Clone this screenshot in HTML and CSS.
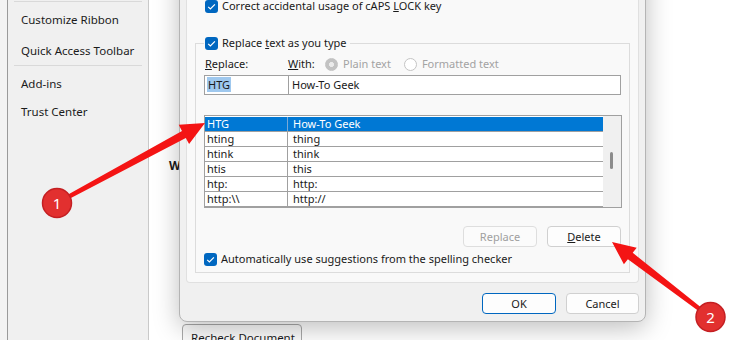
FILE: index.html
```html
<!DOCTYPE html>
<html>
<head>
<meta charset="utf-8">
<link rel="stylesheet" href="styles.css">
</head>
<body>
<div class="app">
  <nav class="nav">
    <div class="sep"></div>
    <div class="item i1">Customize Ribbon</div>
    <div class="item i2">Quick Access Toolbar</div>
    <div class="sep"></div>
    <div class="item i3">Add-ins</div>
    <div class="item">Trust Center</div>
  </nav>
  <main class="content">
    <h3 class="sect">When correcting spelling and grammar in Word</h3>
    <div class="rule"></div>
    <button class="recheck">Recheck Document</button>
  </main>
</div>

<div class="dialog">
  <div class="panel">
    <div class="check-row top-check">
      <span class="cb"><svg viewBox="0 0 13 13" width="13" height="13"><path d="M3.2 6.8 L5.4 9 L9.9 4.3" fill="none" stroke="#fff" stroke-width="1.2"/></svg></span>
      <span>Correct accidental usage of cAPS <u>L</u>OCK key</span>
    </div>
    <fieldset class="group">
      <legend class="check-row legend">
        <span class="cb"><svg viewBox="0 0 13 13" width="13" height="13"><path d="M3.2 6.8 L5.4 9 L9.9 4.3" fill="none" stroke="#fff" stroke-width="1.2"/></svg></span>
        <span>Replace <u>t</u>ext as you type</span>
      </legend>
      <div class="labels">
        <span class="lab-replace"><u>R</u>eplace:</span>
        <span class="lab-with"><u>W</u>ith:</span>
        <span class="radio on"></span>
        <span class="dis plain">Plain text</span>
        <span class="radio"></span>
        <span class="dis">Formatted text</span>
      </div>
      <div class="inputs">
        <div class="field f1"><span class="sel">HTG</span></div>
        <div class="field f2">How-To Geek</div>
      </div>
      <div class="list">
        <div class="rows">
          <div class="row selected"><span class="c1">HTG</span><span class="c2">How-To Geek</span></div>
          <div class="row"><span class="c1">hting</span><span class="c2">thing</span></div>
          <div class="row"><span class="c1">htink</span><span class="c2">think</span></div>
          <div class="row"><span class="c1">htis</span><span class="c2">this</span></div>
          <div class="row"><span class="c1">htp:</span><span class="c2">http:</span></div>
          <div class="row"><span class="c1">http:\\</span><span class="c2">http://</span></div>
        </div>
        <div class="scroll"><span class="thumb"></span></div>
      </div>
      <div class="actions">
        <button class="btn" disabled>Replace</button>
        <button class="btn"><u>D</u>elete</button>
      </div>
      <div class="check-row auto-check">
        <span class="cb"><svg viewBox="0 0 13 13" width="13" height="13"><path d="M3.2 6.8 L5.4 9 L9.9 4.3" fill="none" stroke="#fff" stroke-width="1.2"/></svg></span>
        <span>Automatically use sug<u>g</u>estions from the spelling checker</span>
      </div>
    </fieldset>
  </div>
  <div class="footer">
    <button class="btn ok">OK</button>
    <button class="btn cancel">Cancel</button>
  </div>
</div>

<svg class="annot" width="750" height="340" viewBox="0 0 750 340">
  <polygon class="arrow" points="205,123 189.1,144.1 185.8,137.9 58,204.8 56,201.2 182,130.9 178.7,124.7"/>
  <polygon class="arrow" points="612,242 636.7,247.7 632.7,252.8 711.2,315.4 708.8,318.6 627.9,259.2 623.9,264.3"/>
  <circle class="badge" cx="57" cy="203" r="14.5"/>
  <text class="badge-num" x="57" y="208.5">1</text>
  <circle class="badge" cx="710.5" cy="317" r="14.5"/>
  <text class="badge-num" x="710.5" y="322.5">2</text>
</svg>
</body>
</html>
```
FILE: styles.css
```css
* { box-sizing: border-box; }
html, body { margin: 0; padding: 0; }
body {
  width: 750px;
  height: 340px;
  overflow: hidden;
  position: relative;
  font-family: "Noto Sans", "Open Sans", sans-serif;
  font-size: 11px;
  line-height: 16px;
  color: #1a1a1a;
  background: #f3f3f3;
}

/* background window */
.app { display: flex; height: 340px; padding-left: 7px; }
.nav {
  width: 142px;
  background: #f0f0f0;
  border-left: 1px solid #9a9a9a;
  border-right: 1px solid #c9c9c9;
  padding-top: 1px;
  display: flex;
  flex-direction: column;
}
.sep { height: 1px; background: #d9d9d9; margin: 0 6px; flex: none; }
.item { height: 28px; line-height: 28px; padding-left: 13px; white-space: nowrap; color: #1b1b1b; font-size: 11.5px; }
.i1 { margin-top: 4px; }
.i2 { margin-top: 3px; }
.i3 { margin-top: 4px; }

.content {
  flex: 1;
  background: #fff;
  padding-left: 20px;
  display: flex;
  flex-direction: column;
  min-width: 0;
}
.sect { margin: 158px 0 0; font-size: 12px; font-weight: 700; line-height: 16px; white-space: nowrap; }
.rule { height: 1px; background: #d4d4d4; margin-top: 7px; }
.recheck {
  align-self: flex-start;
  margin: 143px 0 0 13px;
  width: 120px;
  height: 28px;
  flex: none;
  background: #fbfbfb;
  border: 1px solid #a9a9a9;
  border-radius: 4px;
  font: inherit;
  font-size: 11.5px;
  color: #1a1a1a;
  text-align: left;
  white-space: nowrap;
  padding: 0 8px;
}

/* dialog */
.dialog {
  position: absolute;
  left: 179px;
  top: -40px;
  width: 467px;
  height: 362px;
  background: #f0f0f0;
  border: 1px solid #b4b4b4;
  border-radius: 0 0 8px 8px;
  box-shadow: 0 6px 26px rgba(0, 0, 0, 0.26);
  padding: 0 6px;
  display: flex;
  flex-direction: column;
}
.panel {
  background: #f9f9f9;
  border: 1px solid #e0e0e0;
  border-top: 0;
  border-radius: 0 0 4px 4px;
  padding: 37px 8px 0;
}
.check-row { display: flex; align-items: center; height: 16px; gap: 4px; white-space: nowrap; }
.top-check { margin-left: 10px; }
.cb {
  width: 13px;
  height: 13px;
  border-radius: 3px;
  background: #0067c0;
  display: block;
  flex: none;
}
.cb svg { display: block; }

.group {
  margin: 21px 0 9px;
  padding: 0 8px 5px;
  border: 1px solid #dcdcdc;
  min-width: 0;
}
.legend { padding: 0 3px 0 1px; }

.labels { display: flex; align-items: center; height: 16px; margin-top: 5px; white-space: nowrap; }
.lab-replace { width: 84px; padding-left: 1px; }
.lab-with { width: 37px; }
.radio {
  width: 13px;
  height: 13px;
  border-radius: 50%;
  border: 1px solid #c4c4c4;
  background: #fff;
  flex: none;
  margin-right: 5px;
}
.radio.on { border-color: #c2c2c2; background: radial-gradient(circle, #eaeaea 0 2.2px, #c2c2c2 2.8px); }
.dis { color: #a3a3a3; }
.plain { margin-right: 13px; }

.inputs { display: flex; margin-top: 3px; height: 20px; }
.field {
  height: 20px;
  border: 1px solid #a0a0a0;
  background: #fff;
  line-height: 18px;
  white-space: nowrap;
}
.f1 { width: 85px; padding-left: 2px; }
.f2 { flex: 1; margin-left: -1px; padding-left: 3px; }
.sel { background: #9fc8ee; padding: 0 1px; display: inline-block; line-height: 15px; }

.list {
  display: flex;
  margin-top: 20px;
  height: 93px;
  border: 1px solid #a0a0a0;
  background: #fff;
  margin-right: -1px;
}
.rows { flex: 1; padding-top: 1px; }
.row { display: flex; height: 15px; border-bottom: 1px solid #a0a0a0; line-height: 14px; white-space: nowrap; }
.c1 { width: 83px; border-right: 1px solid #a0a0a0; padding-left: 2px; flex: none; }
.c2 { padding-left: 5px; }
.row.selected { background: #0078d4; color: #fff; }
.row.selected .c1 { border-right-color: #7aa9d6; }
.scroll { width: 18px; background: #f0f0f0; flex: none; }
.thumb { display: block; width: 3px; height: 17px; background: #8b8b8b; border-radius: 2px; margin: 36px 0 0 7px; }

.actions { display: flex; justify-content: flex-end; gap: 10px; margin-top: 18px; }
.btn {
  width: 74px;
  height: 21px;
  border: 1px solid #d0d0d0;
  border-radius: 4px;
  background: #fdfdfd;
  font: inherit;
  line-height: 18px;
  color: #1a1a1a;
  padding: 0;
}
.btn:disabled { color: #9f9f9f; border-color: #dedede; background: #fbfbfb; }
.auto-check { margin-top: 4px; }

.footer { display: flex; justify-content: flex-end; gap: 10px; margin-top: 10px; }
.ok { border-color: #0067c0; }
.cancel { width: 73px; }

/* annotations */
.annot { position: absolute; left: 0; top: 0; pointer-events: none; }
.arrow { fill: #f41414; }
.badge { fill: #e2302f; stroke: #c41f22; stroke-width: 1.5; }
.badge-num { fill: #fff; font-family: "Noto Sans", sans-serif; font-size: 15px; text-anchor: middle; }
```
